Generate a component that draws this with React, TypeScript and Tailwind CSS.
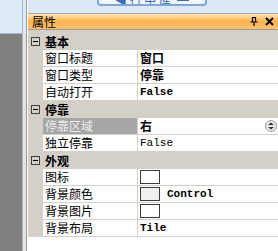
import React from "react";

const cjk = { fontFamily: '"Noto Sans CJK SC", "Noto Sans", sans-serif' };
const mono = { fontFamily: '"Liberation Mono", "Noto Sans CJK SC", monospace' };

function Expander() {
  return (
    <div className="w-[9px] h-[9px] border border-[#404040] bg-[#d4d0c8] flex items-center justify-center">
      <div className="w-[5px] h-[1px] bg-black" />
    </div>
  );
}

function Category({ label }: { label: string }) {
  return (
    <div className="h-[17px] bg-[#d4d0c8] flex items-center pl-[3px]">
      <Expander />
      <span className="ml-[5px] text-[12px] font-bold leading-none text-black" style={cjk}>
        {label}
      </span>
    </div>
  );
}

function Swatch({ fill = "bg-white" }: { fill?: string }) {
  return <div className={`w-[20px] h-[14px] border border-[#3c3c3c] ${fill}`} />;
}

function Row({
  name,
  value,
  selected,
  spin,
}: {
  name: string;
  value: React.ReactNode;
  selected?: boolean;
  spin?: boolean;
}) {
  return (
    <div className="h-[17px] flex bg-[#d4d0c8]">
      <div className="w-[15px]" />
      <div
        className={`w-[95px] border-b border-[#d4d0c8] border-r flex items-center pl-[2px] ${
          selected ? "bg-[#a6a6a6] text-[#ececec]" : "bg-white text-black"
        }`}
      >
        <span className="text-[12px] leading-none" style={cjk}>
          {name}
        </span>
      </div>
      <div className="flex-1 bg-white border-b border-[#d4d0c8] flex items-center pl-[2px] relative">
        {value}
        {spin && (
          <div className="absolute right-[1px] top-[2px] w-[12px] h-[12px] rounded-full border border-[#9a9a9a] bg-[#ececec] flex items-center justify-center">
            <svg width="8" height="8" viewBox="0 0 8 8">
              <path d="M4 0.5 L7 3 L1 3 Z" fill="#303030" />
              <path d="M4 7.5 L7 5 L1 5 Z" fill="#303030" />
            </svg>
          </div>
        )}
      </div>
    </div>
  );
}

const boldCjk = (t: string) => (
  <span className="text-[12px] font-bold leading-none text-black" style={cjk}>
    {t}
  </span>
);
const boldMono = (t: string) => (
  <span className="text-[11px] font-bold leading-none text-black" style={mono}>
    {t}
  </span>
);
const plainMono = (t: string) => (
  <span className="text-[11px] leading-none text-black" style={mono}>
    {t}
  </span>
);

export default function App() {
  return (
    <div className="w-[278px] h-[251px] overflow-hidden bg-[#dce8f6] flex">
      {/* left area */}
      <div className="w-[22px] flex flex-col">
        <div className="h-[34px] bg-[#dfeaf7] border-b border-[#9fb6d3]" />
        <div className="flex-1 bg-[#808080]" />
      </div>
      <div className="w-[1px] flex flex-col">
        <div className="h-[34px] bg-[#9fb6d3]" />
        <div className="flex-1 bg-[#b4b4b4]" />
      </div>
      <div className="w-[3px] flex flex-col">
        <div className="h-[34px] bg-[#dfeaf7]" />
        <div className="flex-1 bg-[#e4e4e4]" />
      </div>
      <div className="w-[1px] bg-[#9a9a9a]" />
      <div className="w-[1px] bg-white" />
      {/* main panel */}
      <div className="flex-1 flex flex-col">
        <div className="h-[13px] relative">
          <div className="absolute left-[69px] top-[-12px] w-[110px] h-[18px] rounded-[4px] border-2 border-[#7ea7dd] bg-[#f3f7fd] flex items-start justify-center gap-[6px] overflow-hidden">
            <span className="text-[12px] leading-none text-[#3a6fb5] mt-[4px]" style={cjk}>
              ◀ 行 中 库
            </span>
            <div className="w-[12px] h-[9px] border border-[#3a6fb5] mt-[2px]" />
          </div>
        </div>
        <div className="h-[1px] bg-[#a9a9a9]" />
        <div className="h-[15px] bg-gradient-to-b from-[#fde5b0] via-[#fbb24a] to-[#fcc36c] flex items-center pl-[4px] pr-[4px]">
          <span className="text-[12px] leading-none text-black" style={cjk}>
            属性
          </span>
          <div className="flex-1" />
          <svg width="8" height="9" viewBox="0 0 8 9" className="mr-[7px]">
            <path d="M2 0.5 H6 M2.5 0.5 V5 M5.5 0.5 V5 M0.5 5 H7.5 M4 5 V9" stroke="#000" strokeWidth="1.2" fill="none" />
          </svg>
          <svg width="9" height="9" viewBox="0 0 9 9">
            <path d="M1 1 L8 8 M8 1 L1 8" stroke="#000" strokeWidth="1.8" />
          </svg>
        </div>
        <div className="h-[1px] bg-[#9c9a94]" />
        <div className="h-[3px] bg-[#d4d0c8]" />
        <Category label="基本" />
        <Row name="窗口标题" value={boldCjk("窗口")} />
        <Row name="窗口类型" value={boldCjk("停靠")} />
        <Row name="自动打开" value={boldMono("False")} />
        <Category label="停靠" />
        <Row name="停靠区域" value={boldCjk("右")} selected spin />
        <Row name="独立停靠" value={plainMono("False")} />
        <Category label="外观" />
        <Row name="图标" value={<Swatch />} />
        <Row
          name="背景颜色"
          value={
            <div className="flex items-center gap-[7px]">
              <Swatch fill="bg-[#f0f0f0]" />
              {boldMono("Control")}
            </div>
          }
        />
        <Row name="背景图片" value={<Swatch />} />
        <Row name="背景布局" value={boldMono("Tile")} />
        <div className="flex-1 bg-white" />
      </div>
    </div>
  );
}
